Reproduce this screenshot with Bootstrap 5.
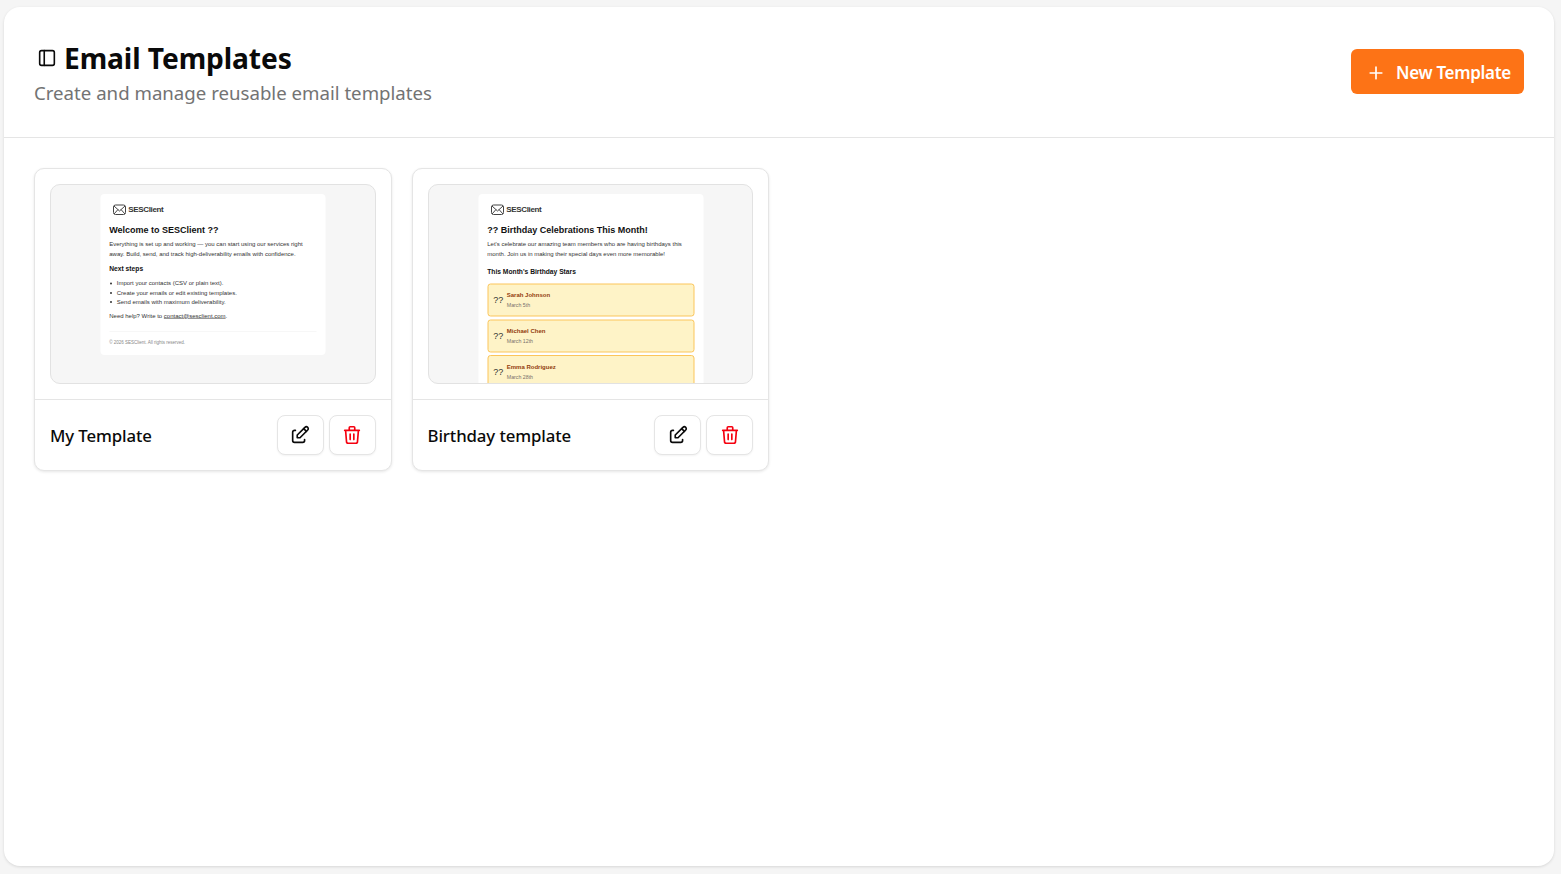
<!DOCTYPE html>
<html lang="en">
<head>
    <meta charset="UTF-8">
    <meta name="viewport" content="width=device-width, initial-scale=1.0">
    <title>Email Templates</title>
    <link rel="stylesheet" href="https://cdn.jsdelivr.net/npm/bootstrap@5.3.2/dist/css/bootstrap.min.css">
    <script src="https://cdn.jsdelivr.net/npm/bootstrap@5.3.2/dist/js/bootstrap.bundle.min.js"></script>
    <style>
        html, body { height: 100%; }
        body { background: #f5f5f5; font-family: "Noto Sans", "Open Sans", sans-serif; color: #0a0a0a; }
        .page-wrap { height: 874px; padding: 7px 7px 8px 4px; }
        .panel { height: 100%; background: #fff; border-radius: 16px; box-shadow: 0 1px 3px rgba(0,0,0,.12); }
        .panel-head { height: 131px; padding: 0 30px; border-bottom: 1px solid #e5e5e5; }
        .panel-heading { padding-top: 2px; }
        .panel-title { font-size: 28.2px; line-height: 36px; font-weight: 700; margin: 0; letter-spacing: -.1px; gap: 6px; }
        .panel-title svg { margin-left: 2px; }
        .panel-sub { font-size: 18.65px; line-height: 26px; color: #737373; margin: 4px 0 0; }
        .btn-new { width: 173px; height: 45px; margin-bottom: 2px; padding: 3px 0 0 15px; background: #fd7316; color: #fff; border: 0; border-radius: 6px; font-size: 17px; font-weight: 600; letter-spacing: -.3px; gap: 10px; }
        .btn-new:hover { background: #f06a10; color: #fff; }
        .tpl-grid { display: grid; grid-template-columns: repeat(4, minmax(0, 1fr)); gap: 20px; padding: 30px; }
        .tpl-card { height: 303px; border: 1px solid #e5e5e5; border-radius: 10px; background: #fff; box-shadow: 0 1px 3px rgba(0,0,0,.1); }
        .tpl-top { height: 231px; padding: 15px; border-bottom: 1px solid #e5e5e5; }
        .tpl-thumb { height: 200px; background: #f6f6f6; border: 1px solid #e2e2e2; border-radius: 10px; overflow: hidden; }
        .mail-scale { width: 200%; transform: scale(.5); transform-origin: top left; padding-top: 18px; }
        .mail-body { width: 450px; height: 800px; margin: 0 auto; background: #fff; border-radius: 8px; padding: 18px 18px; font-family: "Liberation Sans", Arial, sans-serif; color: #333; font-size: 12px; line-height: 20px; }
        .mail-body.short { height: 322px; }
        .mail-logo { height: 26px; padding-left: 6px; color: #333; font-size: 16px; font-weight: 700; letter-spacing: -.7px; }
        .mail-h { font-size: 18px; line-height: 24px; font-weight: 700; color: #111; margin: 16px 0 6px; }
        .mail-h2 { font-size: 13.4px; line-height: 18px; font-weight: 700; color: #111; margin: 0; }
        .steps-head { margin-top: 10px; }
        .bday-head { margin: 17px 0 14px; }
        .mail-p { margin: 0; }
        .mail-list { margin: 11px 0 9px; padding-left: 15px; line-height: 18.6px; }
        .mail-link { color: #333; text-decoration: underline; }
        .mail-foot { border-top: 1px solid #eee; margin-top: 20px; padding-top: 12px; font-size: 9px; color: #888; }
        .bday { height: 66px; margin-bottom: 5.5px; padding: 0 10px; gap: 7px; background: #fef3c7; border: 2px solid #fbc55b; border-radius: 6px; }
        .bday-q { font-size: 18px; color: #333; }
        .bday-name { font-size: 12px; font-weight: 700; color: #92400e; line-height: 20px; }
        .bday-date { font-size: 10.5px; color: #78716c; line-height: 20px; }
        .tpl-foot { height: 70px; padding: 0 15px; }
        .tpl-name { font-size: 16.8px; font-weight: 500; letter-spacing: -.1px; margin-top: 1px; }
        .tpl-actions { gap: 5px; }
        .btn-tool { width: 47px; height: 40px; padding: 0; background: #fff; border: 1px solid #e5e5e5; border-radius: 8px; box-shadow: 0 1px 2px rgba(0,0,0,.05); }
    </style>
</head>
<body>
    <div class="page-wrap">
        <div class="panel">
            <!-- Header -->
            <div class="panel-head d-flex justify-content-between align-items-center">
                <div class="panel-heading">
                    <h1 class="panel-title d-flex align-items-center">
                        <svg width="22" height="22" viewBox="0 0 24 24" fill="none" stroke="#0a0a0a" stroke-width="1.75" stroke-linecap="round" stroke-linejoin="round"><rect x="4" y="4" width="16" height="16" rx="2"/><path d="M9 4v16"/></svg>
                        Email Templates
                    </h1>
                    <p class="panel-sub">Create and manage reusable email templates</p>
                </div>
                <button class="btn btn-new d-flex align-items-center text-nowrap" type="button">
                    <svg width="20" height="20" viewBox="0 0 24 24" fill="none" stroke="#fff" stroke-width="2" stroke-linecap="round"><path d="M5 12h14M12 5v14"/></svg>
                    New Template
                </button>
            </div>

            <!-- Templates -->
            <div class="tpl-grid">
                <div class="tpl-card">
                    <div class="tpl-top">
                        <div class="tpl-thumb">
                            <div class="mail-scale">
                                <div class="mail-body short">
                                    <div class="mail-logo d-flex align-items-center gap-1">
                                        <svg width="28" height="26" viewBox="0 0 28 26" fill="none" stroke="#444" stroke-width="2" stroke-linejoin="round"><rect x="2" y="4" width="24" height="19" rx="4"/><path d="M3 6l11 10 11-10M3 22l8-9M25 22l-8-9"/></svg>
                                        SESClient
                                    </div>
                                    <h2 class="mail-h">Welcome to SESClient ??</h2>
                                    <p class="mail-p">Everything is set up and working — you can start using our services right away. Build, send, and track high-deliverability emails with confidence.</p>
                                    <h3 class="mail-h2 steps-head">Next steps</h3>
                                    <ul class="mail-list">
                                        <li>Import your contacts (CSV or plain text).</li>
                                        <li>Create your emails or edit existing templates.</li>
                                        <li>Send emails with maximum deliverability.</li>
                                    </ul>
                                    <p class="mail-p">Need help? Write to <span class="mail-link">contact@sesclient.com</span>.</p>
                                    <div class="mail-foot">© 2026 SESClient. All rights reserved.</div>
                                </div>
                            </div>
                        </div>
                    </div>
                    <div class="tpl-foot d-flex justify-content-between align-items-center">
                        <span class="tpl-name">My Template</span>
                        <div class="tpl-actions d-flex">
                            <button class="btn btn-tool d-flex align-items-center justify-content-center" type="button" aria-label="Edit">
                                <svg width="22" height="22" viewBox="0 0 24 24" fill="none" stroke="#0a0a0a" stroke-width="1.8" stroke-linecap="round" stroke-linejoin="round"><path d="M7 7h-1a2 2 0 0 0-2 2v9a2 2 0 0 0 2 2h9a2 2 0 0 0 2-2v-1"/><path d="M20.385 6.585a2.1 2.1 0 0 0-2.97-2.97l-8.415 8.385v3h3l8.385-8.415z"/><path d="M16 5l3 3"/></svg>
                            </button>
                            <button class="btn btn-tool d-flex align-items-center justify-content-center" type="button" aria-label="Delete">
                                <svg width="22" height="22" viewBox="0 0 24 24" fill="none" stroke="#f5000f" stroke-width="1.8" stroke-linecap="round" stroke-linejoin="round"><path d="M4 7h16M10 11v6M14 11v6M5 7l1 12a2 2 0 0 0 2 2h8a2 2 0 0 0 2-2l1-12M9 7v-3a1 1 0 0 1 1-1h4a1 1 0 0 1 1 1v3"/></svg>
                            </button>
                        </div>
                    </div>
                </div>

                <div class="tpl-card">
                    <div class="tpl-top">
                        <div class="tpl-thumb">
                            <div class="mail-scale">
                                <div class="mail-body">
                                    <div class="mail-logo d-flex align-items-center gap-1">
                                        <svg width="28" height="26" viewBox="0 0 28 26" fill="none" stroke="#444" stroke-width="2" stroke-linejoin="round"><rect x="2" y="4" width="24" height="19" rx="4"/><path d="M3 6l11 10 11-10M3 22l8-9M25 22l-8-9"/></svg>
                                        SESClient
                                    </div>
                                    <h2 class="mail-h">?? Birthday Celebrations This Month!</h2>
                                    <p class="mail-p">Let's celebrate our amazing team members who are having birthdays this month. Join us in making their special days even more memorable!</p>
                                    <h3 class="mail-h2 bday-head">This Month's Birthday Stars</h3>
                                    <div class="bday d-flex align-items-center">
                                        <span class="bday-q">??</span>
                                        <div><div class="bday-name">Sarah Johnson</div><div class="bday-date">March 5th</div></div>
                                    </div>
                                    <div class="bday d-flex align-items-center">
                                        <span class="bday-q">??</span>
                                        <div><div class="bday-name">Michael Chen</div><div class="bday-date">March 12th</div></div>
                                    </div>
                                    <div class="bday d-flex align-items-center">
                                        <span class="bday-q">??</span>
                                        <div><div class="bday-name">Emma Rodriguez</div><div class="bday-date">March 28th</div></div>
                                    </div>
                                </div>
                            </div>
                        </div>
                    </div>
                    <div class="tpl-foot d-flex justify-content-between align-items-center">
                        <span class="tpl-name">Birthday template</span>
                        <div class="tpl-actions d-flex">
                            <button class="btn btn-tool d-flex align-items-center justify-content-center" type="button" aria-label="Edit">
                                <svg width="22" height="22" viewBox="0 0 24 24" fill="none" stroke="#0a0a0a" stroke-width="1.8" stroke-linecap="round" stroke-linejoin="round"><path d="M7 7h-1a2 2 0 0 0-2 2v9a2 2 0 0 0 2 2h9a2 2 0 0 0 2-2v-1"/><path d="M20.385 6.585a2.1 2.1 0 0 0-2.97-2.97l-8.415 8.385v3h3l8.385-8.415z"/><path d="M16 5l3 3"/></svg>
                            </button>
                            <button class="btn btn-tool d-flex align-items-center justify-content-center" type="button" aria-label="Delete">
                                <svg width="22" height="22" viewBox="0 0 24 24" fill="none" stroke="#f5000f" stroke-width="1.8" stroke-linecap="round" stroke-linejoin="round"><path d="M4 7h16M10 11v6M14 11v6M5 7l1 12a2 2 0 0 0 2 2h8a2 2 0 0 0 2-2l1-12M9 7v-3a1 1 0 0 1 1-1h4a1 1 0 0 1 1 1v3"/></svg>
                            </button>
                        </div>
                    </div>
                </div>
            </div>
        </div>
    </div>
</body>
</html>
